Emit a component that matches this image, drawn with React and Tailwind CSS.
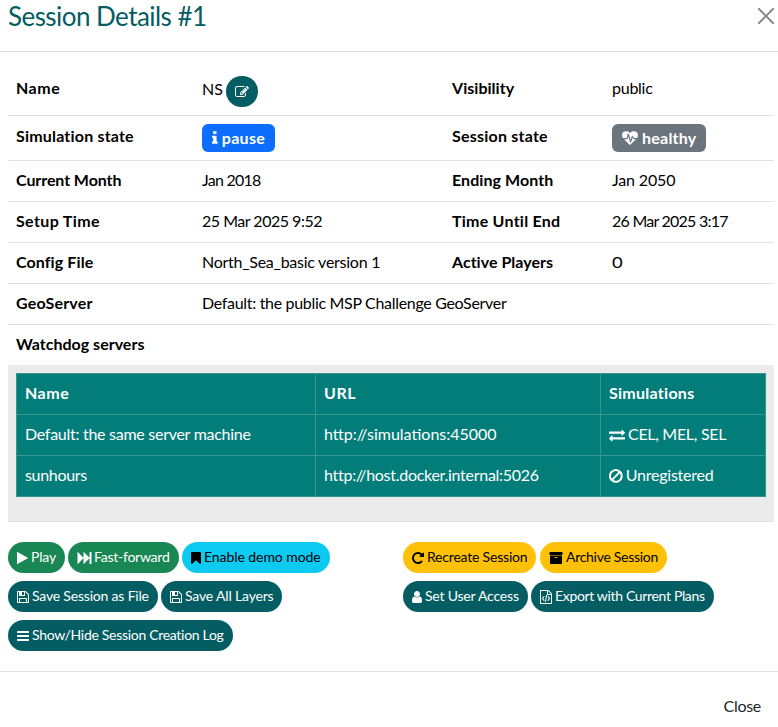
const PATHS = {
  floppy: "M512 1536h768v-384h-768v384zm896 0h128v-896q0-14-10-38.5t-20-34.5l-281-281q-10-10-34-20t-39-10v416q0 40-28 68t-68 28h-576q-40 0-68-28t-28-68v-416h-128v1280h128v-416q0-40 28-68t68-28h832q40 0 68 28t28 68v416zm-384-928v-320q0-13-9.5-22.5t-22.5-9.5h-192q-13 0-22.5 9.5t-9.5 22.5v320q0 13 9.5 22.5t22.5 9.5h192q13 0 22.5-9.5t9.5-22.5zm640 32v928q0 40-28 68t-68 28h-1344q-40 0-68-28t-28-68v-1344q0-40 28-68t68-28h928q40 0 88 20t76 48l280 280q28 28 48 76t20 88z",
  edit: "M888 1184l116-116-152-152-116 116v56h96v96h56zm440-720q-16-16-33 1l-350 350q-17 17-1 33t33-1l350-350q17-17 1-33zm80 594v190q0 119-84.5 203.5t-203.5 84.5h-832q-119 0-203.5-84.5t-84.5-203.5v-832q0-119 84.5-203.5t203.5-84.5h832q63 0 117 25 15 7 18 23 3 17-9 29l-49 49q-14 14-32 8-23-6-45-6h-832q-66 0-113 47t-47 113v832q0 66 47 113t113 47h832q66 0 113-47t47-113v-126q0-13 9-22l64-64q15-15 35-7t20 29zm-96-738l288 288-672 672h-288v-288zm444 132l-92 92-288-288 92-92q28-28 68-28t68 28l152 152q28 28 28 68t-28 68z",
  info: "M1216 1344v128q0 26-19 45t-45 19h-512q-26 0-45-19t-19-45v-128q0-26 19-45t45-19h64v-384h-64q-26 0-45-19t-19-45v-128q0-26 19-45t45-19h384q26 0 45 19t19 45v576h64q26 0 45 19t19 45zm-128-1152v192q0 26-19 45t-45 19h-256q-26 0-45-19t-19-45v-192q0-26 19-45t45-19h256q26 0 45 19t19 45z",
  heartbeat: "M1280 1024h305q-5 6-10 10.5t-9 7.5l-3 4-623 600q-18 18-44 18t-44-18l-624-602q-5-2-21-20h369q22 0 39.5-13.5t22.5-34.5l70-281 190 667q6 20 23 33t39 13q21 0 38-13t23-33l146-485 56 112q18 35 57 35zm512-428q0 145-103 300h-369l-111-221q-8-17-25.5-27t-36.5-8q-45 5-56 46l-129 430-196-686q-6-20-23.5-33t-39.5-13-39 13.5-22 34.5l-116 464h-423q-103-155-103-300 0-220 127-344t351-124q62 0 126.5 21.5t120 58 95.5 68.5 76 68q36-36 76-68t95.5-68.5 120-58 126.5-21.5q224 0 351 124t127 344z",
  exchange: "M1792 1184v192q0 13-9.5 22.5t-22.5 9.5h-1376v192q0 13-9.5 22.5t-22.5 9.5q-12 0-24-10l-319-320q-9-9-9-22 0-14 9-23l320-320q9-9 23-9 13 0 22.5 9.5t9.5 22.5v192h1376q13 0 22.5 9.5t9.5 22.5zm0-544q0 14-9 23l-320 320q-9 9-23 9-13 0-22.5-9.5t-9.5-22.5v-192h-1376q-13 0-22.5-9.5t-9.5-22.5v-192q0-13 9.5-22.5t22.5-9.5h1376v-192q0-14 9-23t23-9q12 0 24 10l319 319q9 9 9 23z",
  ban: "M1440 893q0-161-87-295l-754 753q137 89 297 89 111 0 211.5-43.5t173.5-116.5 116-174.5 43-212.5zm-999 299l755-754q-135-91-300-91-148 0-273 73t-198 199-73 274q0 162 89 299zm1223-299q0 157-61 300t-163.5 246-245 164-298.5 61-298.5-61-245-164-163.5-246-61-300 61-299.5 163.5-245.5 245-164 298.5-61 298.5 61 245 164 163.5 245.5 61 299.5z",
  play: "M1576 927l-1328 738q-23 13-39.5 3t-16.5-36v-1472q0-26 16.5-36t39.5 3l1328 738q23 13 23 31t-23 31z",
  forward: "M45 1651q-19 19-32 13t-13-32v-1472q0-26 13-32t32 13l710 710q8 8 13 19v-710q0-26 13-32t32 13l710 710q8 8 13 19v-678q0-26 19-45t45-19h128q26 0 45 19t19 45v1408q0 26-19 45t-45 19h-128q-26 0-45-19t-19-45v-678q-5 10-13 19l-710 710q-19 19-32 13t-13-32v-710q-5 10-13 19z",
  bookmark: "M1420 128q23 0 44 9 33 13 52.5 41t19.5 62v1289q0 34-19.5 62t-52.5 41q-19 8-44 8-48 0-83-32l-441-424-441 424q-36 33-83 33-23 0-44-9-33-13-52.5-41t-19.5-62v-1289q0-34 19.5-62t52.5-41q21-9 44-9h1048z",
  repeat: "M1664 256v448q0 26-19 45t-45 19h-448q-42 0-59-40-17-39 14-69l138-138q-148-137-349-137-104 0-198.5 40.5t-163.5 109.5-109.5 163.5-40.5 198.5 40.5 198.5 109.5 163.5 163.5 109.5 198.5 40.5q119 0 225-52t179-147q7-10 23-12 15 0 25 9l137 138q9 8 9.5 20.5t-7.5 22.5q-109 132-264 204.5t-327 72.5q-156 0-298-61t-245-164-164-245-61-298 61-298 164-245 245-164 298-61q147 0 284.5 55.5t244.5 156.5l130-129q29-31 70-14 39 17 39 59z",
  archive: "M1088 832q0-26-19-45t-45-19h-256q-26 0-45 19t-19 45 19 45 45 19h256q26 0 45-19t19-45zm576-192v960q0 26-19 45t-45 19h-1408q-26 0-45-19t-19-45v-960q0-26 19-45t45-19h1408q26 0 45 19t19 45zm64-448v256q0 26-19 45t-45 19h-1536q-26 0-45-19t-19-45v-256q0-26 19-45t45-19h1536q26 0 45 19t19 45z",
  user: "M1536 1399q0 109-62.5 187t-150.5 78h-854q-88 0-150.5-78t-62.5-187q0-85 8.5-160.5t31.5-152 58.5-131 94-89 134.5-34.5q131 128 313 128t313-128q76 0 134.5 34.5t94 89 58.5 131 31.5 152 8.5 160.5zm-256-887q0 159-112.5 271.5t-271.5 112.5-271.5-112.5-112.5-271.5 112.5-271.5 271.5-112.5 271.5 112.5 112.5 271.5z",
  code: "M1596 380q28 28 48 76t20 88v1152q0 40-28 68t-68 28h-1344q-40 0-68-28t-28-68v-1600q0-40 28-68t68-28h896q40 0 88 20t76 48zm-444-244v376h376q-10-29-22-41l-313-313q-12-12-41-22zm384 1528v-1024h-416q-40 0-68-28t-28-68v-416h-768v1536h1280zm-928-896q8-11 21-12.5t24 6.5l51 38q11 8 12.5 21t-6.5 24l-182 243 182 243q8 11 6.5 24t-12.5 21l-51 38q-11 8-24 6.5t-21-12.5l-226-301q-14-19 0-38zm802 301q14 19 0 38l-226 301q-8 11-21 12.5t-24-6.5l-51-38q-11-8-12.5-21t6.5-24l182-243-182-243q-8-11-6.5-24t12.5-21l51-38q11-8 24-6.5t21 12.5zm-620 461q-13-2-20.5-13t-5.5-24l138-831q2-13 13-20.5t24-5.5l63 10q13 2 20.5 13t5.5 24l-138 831q-2 13-13 20.5t-24 5.5z",
  bars: "M1664 1344v128q0 26-19 45t-45 19h-1408q-26 0-45-19t-19-45v-128q0-26 19-45t45-19h1408q26 0 45 19t19 45zm0-512v128q0 26-19 45t-45 19h-1408q-26 0-45-19t-19-45v-128q0-26 19-45t45-19h1408q26 0 45 19t19 45zm0-512v128q0 26-19 45t-45 19h-1408q-26 0-45-19t-19-45v-128q0-26 19-45t45-19h1408q26 0 45 19t19 45z",
};

// Each glyph sits in a 1792-unit em; x and w crop the box to its advance width.
function Icon({ name, x = 128, w = 1536, className = "h-[14px]" }) {
  return (
    <svg viewBox={`${x} 0 ${w} 1792`} className={`shrink-0 overflow-visible ${className}`} fill="currentColor" aria-hidden="true">
      <path d={PATHS[name]} />
    </svg>
  );
}

function Btn({ className, icon, text, tracking }) {
  return (
    <button className={`flex h-[31px] shrink-0 items-center gap-[3px] rounded-full pl-[9px] text-[14px] leading-[21px] ${className}`}>
      {icon}
      <span className={`pb-[2px] ${tracking}`}>{text}</span>
    </button>
  );
}

const TEAL = "bg-[#045d62] text-white";

function Row({ className = "h-[41px] border-b pt-[7px]", children }) {
  return (
    <div className={`grid grid-cols-[186px_250px_160px_1fr] border-[#dee2e6] px-2 ${className}`}>{children}</div>
  );
}

function Label({ className, children }) {
  return <div className={`font-bold ${className}`}>{children}</div>;
}

function ServerRow({ className = "", children }) {
  return <div className={`grid h-[41px] grid-cols-[299px_285px_1fr] border-b border-[#36978f] ${className}`}>{children}</div>;
}

function Cell({ className = "", children }) {
  return <div className={`flex items-center gap-[3px] border-r border-[#36978f] pb-[2px] pl-2 ${className}`}>{children}</div>;
}

export default function App() {
  return (
    <div className="h-[727px] w-[778px] overflow-hidden whitespace-nowrap bg-white font-['Lato',sans-serif] text-[16px] leading-6 text-black">
      <header className="flex h-[52px] items-start justify-between border-b border-[#dee2e6] pl-2">
        <h4 className="text-[26px] leading-[32px] tracking-[-0.55px] text-[#045d62]">Session Details #1</h4>
        <svg viewBox="0 0 16 16" className="mt-2 mr-[4px] h-4 w-4 text-[#808080]" fill="none" stroke="currentColor" strokeWidth="1.9" strokeLinecap="round">
          <path d="M0.9 0.9L15.1 15.1M15.1 0.9L0.9 15.1" />
        </svg>
      </header>

      <main className="ml-2 w-[766px] pt-4">
        <Row className="h-[48px] border-b pt-2">
          <Label className="tracking-[0.5px]">Name</Label>
          <div className="flex items-start gap-[3px]">
            <span className="mt-px w-[21px]">NS</span>
            <button className={`flex h-[31px] w-[32px] items-center justify-center rounded-full ${TEAL}`}>
              <Icon name="edit" x={0} w={1792} />
            </button>
          </div>
          <Label className="tracking-[0.03px]">Visibility</Label>
          <div className="tracking-[-0.25px]">public</div>
        </Row>
        <Row className="h-[45px] border-b pt-2">
          <Label className="tracking-[0.19px]">Simulation state</Label>
          <div>
            <span className="flex h-[28px] w-[73px] items-center gap-[4px] rounded-[6px] bg-[#0d6efd] pl-[10px] font-bold text-white">
              <Icon name="info" x={576} w={640} className="h-4" />
              <span className="tracking-[0.338px]">pause</span>
            </span>
          </div>
          <Label className="tracking-[0.22px]">Session state</Label>
          <div>
            <span className="flex h-[28px] w-[94px] items-center gap-[4px] rounded-[6px] bg-[#6c757d] pl-[10px] font-bold text-white">
              <Icon name="heartbeat" x={0} w={1792} className="h-4" />
              <span className="tracking-[0.234px]">healthy</span>
            </span>
          </div>
        </Row>
        <Row>
          <Label className="tracking-[-0.08px]">Current Month</Label>
          <div className="tracking-[-0.75px]">Jan 2018</div>
          <Label className="tracking-[0.08px]">Ending Month</Label>
          <div className="tracking-[-0.15px]">Jan 2050</div>
        </Row>
        <Row>
          <Label className="tracking-[0.36px]">Setup Time</Label>
          <div className="tracking-[-0.492px]">25 Mar 2025 9:52</div>
          <Label className="tracking-[0.24px]">Time Until End</Label>
          <div className="tracking-[-0.76px]">26 Mar 2025 3:17</div>
        </Row>
        <Row>
          <Label className="tracking-[0.1px]">Config File</Label>
          <div className="tracking-[-0.26px]">North_Sea_basic version 1</div>
          <Label className="tracking-[0.02px]">Active Players</Label>
          <div>
            <span className="inline-block origin-left scale-x-[1.15]">0</span>
          </div>
        </Row>
        <Row>
          <Label className="tracking-[0.18px]">GeoServer</Label>
          <div className="tracking-[-0.315px]">Default: the public MSP Challenge GeoServer</div>
        </Row>
        <Row className="h-[40px] pt-[7px]">
          <Label className="tracking-[0.01px]">Watchdog servers</Label>
        </Row>

        <section className="h-[157px] border-b border-[#dee2e6] bg-[#ebebeb] p-2">
          <div className="border-t border-l border-[#36978f] bg-[#037d79] text-white">
            <ServerRow className="font-bold">
              <Cell className="tracking-[0.5px]">Name</Cell>
              <Cell className="tracking-[0.505px]">URL</Cell>
              <Cell className="tracking-[0.27px]">Simulations</Cell>
            </ServerRow>
            <ServerRow>
              <Cell className="tracking-[-0.275px]">Default: the same server machine</Cell>
              <Cell className="tracking-[0px]">http://simulations:45000</Cell>
              <Cell className="tracking-[-0.3px]">
                <Icon name="exchange" x={0} w={1792} className="h-4 mt-px" />
                <span>CEL, MEL, SEL</span>
              </Cell>
            </ServerRow>
            <ServerRow>
              <Cell className="tracking-[-0.32px]">sunhours</Cell>
              <Cell className="tracking-[-0.28px]">http://host.docker.internal:5026</Cell>
              <Cell className="tracking-[-0.23px]">
                <Icon name="ban" className="h-4 mt-px" />
                <span>Unregistered</span>
              </Cell>
            </ServerRow>
          </div>
        </section>

        <div className="grid grid-cols-[395px_1fr] pt-5">
          <div className="flex flex-col gap-2">
            <div className="flex gap-[3px]">
              <Btn className="w-[57px] bg-[#198754] text-white" icon={<Icon name="play" x={192} w={1408} />} text="Play" tracking="tracking-[-0.172px]" />
              <Btn className="w-[111px] bg-[#198754] text-white" icon={<Icon name="forward" x={-64} w={1792} />} text="Fast-forward" tracking="tracking-[-0.243px]" />
              <Btn className="w-[148px] bg-[#0dcaf0] text-black" icon={<Icon name="bookmark" x={256} w={1280} />} text="Enable demo mode" tracking="tracking-[-0.07px]" />
            </div>
            <div className="flex gap-[3px]">
              <Btn className={`w-[150px] ${TEAL}`} icon={<Icon name="floppy" />} text="Save Session as File" tracking="tracking-[-0.19px]" />
              <Btn className={`w-[121px] ${TEAL}`} icon={<Icon name="floppy" />} text="Save All Layers" tracking="tracking-[-0.167px]" />
            </div>
            <div className="flex">
              <Btn className={`w-[225px] ${TEAL}`} icon={<Icon name="bars" />} text="Show/Hide Session Creation Log" tracking="tracking-[-0.3px]" />
            </div>
          </div>
          <div className="flex flex-col gap-2">
            <div className="flex gap-[4px]">
              <Btn className="w-[133px] bg-[#ffc107] text-black" icon={<Icon name="repeat" />} text="Recreate Session" tracking="tracking-[-0.2px]" />
              <Btn className="w-[127px] bg-[#ffc107] text-black" icon={<Icon name="archive" x={0} w={1792} />} text="Archive Session" tracking="tracking-[-0.29px]" />
            </div>
            <div className="flex gap-[3px]">
              <Btn className={`w-[125px] ${TEAL}`} icon={<Icon name="user" x={256} w={1280} />} text="Set User Access" tracking="tracking-[-0.2px]" />
              <Btn className={`w-[183px] ${TEAL}`} icon={<Icon name="code" />} text="Export with Current Plans" tracking="tracking-[-0.34px]" />
            </div>
          </div>
        </div>
      </main>

      <footer className="mt-5 flex justify-end border-t border-[#dee2e6] pt-[22px] pr-[17px]">
        <button className="tracking-[-0.3px] text-[#212529]">Close</button>
      </footer>
    </div>
  );
}
